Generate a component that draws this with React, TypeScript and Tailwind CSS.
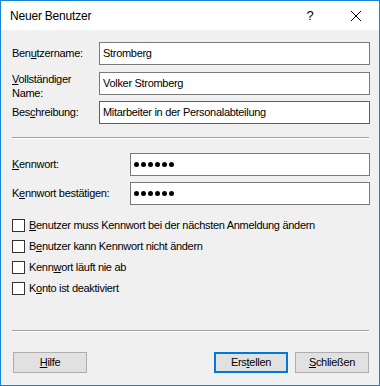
import React from "react";

const FONT = "font-['Liberation_Sans',Arial,sans-serif]";

function Field({ value, focused }: { value: string; focused?: boolean }) {
  return (
    <div
      className={`flex h-[23px] w-[271px] items-center border bg-white pl-[3px] ${
        focused ? "border-[#0078d7]" : "border-[#7a7a7a]"
      }`}
    >
      {value}
    </div>
  );
}

function PasswordField() {
  return (
    <div className="flex h-[23px] w-[240px] items-center gap-[2px] border border-[#7a7a7a] bg-white pl-[3px]">
      {[0, 1, 2, 3, 4, 5].map((i) => (
        <span key={i} className="h-[5px] w-[5px] rounded-full bg-black" />
      ))}
    </div>
  );
}

function Check({ children }: { children: React.ReactNode }) {
  return (
    <div className="flex h-[21px] items-center">
      <span className="h-[13px] w-[13px] border border-[#333333] bg-white" />
      <span className="ml-[4px]">{children}</span>
    </div>
  );
}

function Separator() {
  return (
    <div className="w-[357px]">
      <div className="h-px bg-[#a0a0a0]" />
      <div className="h-px bg-white" />
    </div>
  );
}

function Button({ children, primary }: { children: React.ReactNode; primary?: boolean }) {
  return (
    <div
      className={`flex h-[21px] w-[74px] items-center justify-center bg-[#e1e1e1] ${
        primary ? "border-2 border-[#0078d7]" : "border border-[#adadad]"
      }`}
    >
      {children}
    </div>
  );
}

export default function App() {
  return (
    <div className={`flex h-[386px] w-[380px] flex-col border border-[#1883d7] bg-[#f0f0f0] text-[11px] tracking-[-0.3px] text-black ${FONT}`}>
      {/* Titelleiste */}
      <div className="flex h-[29px] items-center bg-white text-[12px] tracking-[-0.2px]">
        <div className="flex-1 pl-[9px]">Neuer Benutzer</div>
        <div className="flex h-full w-[46px] items-center justify-center text-[13px]">?</div>
        <div className="flex h-full w-[46px] items-center justify-center">
          <svg width="10" height="10" viewBox="0 0 10 10">
            <path d="M0 0L10 10M10 0L0 10" stroke="#000" strokeWidth="1" />
          </svg>
        </div>
      </div>

      <div className="flex flex-col pl-[11px]">
        <div className="mt-[12px] flex items-center">
          <div className="w-[87px]">
            Ben<span className="underline">u</span>tzername:
          </div>
          <Field value="Stromberg" />
        </div>

        <div className="mt-[7px] flex items-start">
          <div className="w-[87px] leading-[14px]">
            <span className="underline">V</span>ollständiger
            <br />
            Name:
          </div>
          <Field value="Volker Stromberg" />
        </div>

        <div className="mt-[1px] flex items-center">
          <div className="w-[87px]">
            Bes<span className="underline">c</span>hreibung:
          </div>
          <Field value="Mitarbeiter in der Personalabteilung" focused />
        </div>

        <div className="mt-[13px]">
          <Separator />
        </div>

        <div className="mt-[14px] flex items-center">
          <div className="w-[118px]">
            <span className="underline">K</span>ennwort:
          </div>
          <PasswordField />
        </div>

        <div className="mt-[6px] flex items-center">
          <div className="w-[118px]">
            K<span className="underline">e</span>nnwort bestätigen:
          </div>
          <PasswordField />
        </div>

        <div className="mt-[10px] flex flex-col">
          <Check>
            <span className="underline">B</span>enutzer muss Kennwort bei der nächsten Anmeldung ändern
          </Check>
          <Check>
            B<span className="underline">e</span>nutzer kann Kennwort nicht ändern
          </Check>
          <Check>
            Kenn<span className="underline">w</span>ort läuft nie ab
          </Check>
          <Check>
            K<span className="underline">o</span>nto ist deaktiviert
          </Check>
        </div>

        <div className="mt-[31px]">
          <Separator />
        </div>

        <div className="ml-[1px] mt-[20px] flex w-[356px] items-center">
          <Button>
            <span className="underline">H</span>ilfe
          </Button>
          <div className="flex-1" />
          <Button primary>
            Ers<span className="underline">t</span>ellen
          </Button>
          <div className="w-[7px]" />
          <Button>
            <span className="underline">S</span>chließen
          </Button>
        </div>
      </div>
    </div>
  );
}
